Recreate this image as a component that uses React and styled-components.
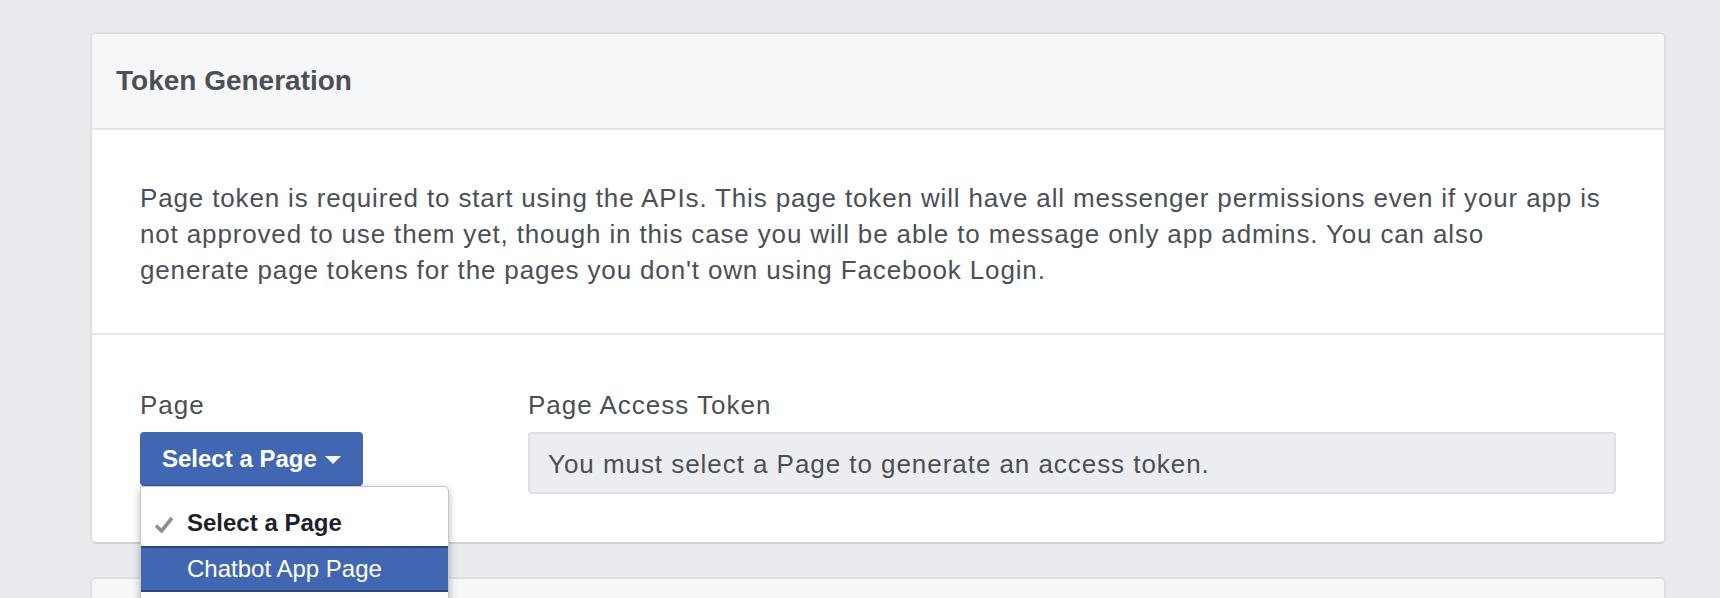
import React from 'react';
import styled, { createGlobalStyle } from 'styled-components';

const GlobalStyle = createGlobalStyle`
  html, body {
    margin: 0;
    padding: 0;
    background: #e9ebee;
    overflow: hidden;
    font-family: 'Liberation Sans', Helvetica, Arial, sans-serif;
    -webkit-font-smoothing: antialiased;
  }
`;

const Page = styled.div`
  padding: 32px 54px 0 90px;
`;

const Card = styled.section`
  background: #fff;
  border: 2px solid #dddfe2;
  border-bottom-color: #d0d1d5;
  border-radius: 6px;
  & + & {
    margin-top: 33px;
  }
`;

const CardHeader = styled.header`
  height: 94px;
  display: flex;
  align-items: center;
  padding: 0 24px;
  background: #f6f7f9;
  border-bottom: 2px solid #e5e5e5;
  border-radius: 4px 4px 0 0;
  color: #4b4f56;
  font-size: 28px;
  font-weight: bold;
`;

const Description = styled.p`
  margin: 0;
  padding: 50px 40px 45px 48px;
  border-bottom: 2px solid #e5e5e5;
  color: #4b4f56;
  font-size: 26px;
  line-height: 36px;
  letter-spacing: 0.85px;
  white-space: nowrap;
`;

const Form = styled.div`
  display: grid;
  grid-template-columns: 388px 1fr;
  padding: 55px 48px 48px;
`;

const Field = styled.div`
  display: flex;
  flex-direction: column;
  align-items: flex-start;
`;

const Label = styled.label`
  font-size: 26px;
  line-height: 30px;
  letter-spacing: 1px;
  margin-bottom: 12px;
  color: #4b4f56;
`;

const SelectWrap = styled.div`
  position: relative;
`;

const SelectButton = styled.button`
  height: 54px;
  display: inline-flex;
  align-items: center;
  gap: 8px;
  padding: 0 20px;
  background: #4267b2;
  border: 2px solid #4267b2;
  border-bottom-color: #3b5ea6;
  border-radius: 4px;
  color: #fff;
  font-family: inherit;
  font-size: 24px;
  font-weight: bold;
  cursor: pointer;
`;

const Caret = styled.span`
  width: 0;
  height: 0;
  border-left: 8px solid transparent;
  border-right: 8px solid transparent;
  border-top: 8px solid #fff;
  margin-top: 2px;
`;

const Menu = styled.ul`
  position: absolute;
  top: 100%;
  left: 0;
  z-index: 10;
  width: 309px;
  margin: 0;
  padding: 13px 0 14px;
  list-style: none;
  background: #fff;
  border: 1px solid #c4c7cc;
  border-radius: 0 5px 5px 5px;
  box-shadow: 0 3px 8px rgba(0, 0, 0, 0.28);
  box-sizing: border-box;
`;

const MenuItem = styled.li`
  position: relative;
  height: 46px;
  box-sizing: border-box;
  display: flex;
  align-items: center;
  padding-left: 46px;
  font-size: 24px;
  border-top: 2px solid ${(p) => (p.$active ? '#29487d' : 'transparent')};
  border-bottom: 2px solid ${(p) => (p.$active ? '#29487d' : 'transparent')};
  background: ${(p) => (p.$active ? '#4267b2' : 'transparent')};
  color: ${(p) => (p.$active ? '#fff' : '#1d2129')};
  font-weight: ${(p) => (p.$checked ? 'bold' : 'normal')};
`;

const Check = styled.svg`
  position: absolute;
  left: 13px;
  top: 14px;
`;

const TokenBox = styled.div`
  align-self: stretch;
  height: 62px;
  box-sizing: border-box;
  display: flex;
  align-items: center;
  padding: 2px 18px 0;
  background: #ebedf0;
  border: 2px solid #dddfe2;
  border-radius: 4px;
  color: #4b4f56;
  font-size: 26px;
  letter-spacing: 0.95px;
`;

const StubCard = styled(Card)`
  height: 100px;
  overflow: hidden;
`;

const StubHeader = styled.div`
  height: 100%;
  background: #f6f7f9;
`;

export default function App() {
  return (
    <>
      <GlobalStyle />
      <Page>
        <Card>
          <CardHeader>Token Generation</CardHeader>
          <Description>
            Page token is required to start using the APIs. This page token will have all messenger
            permissions even if your app is
            <br />
            not approved to use them yet, though in this case you will be able to message only app
            admins. You can also
            <br />
            generate page tokens for the pages you don't own using Facebook Login.
          </Description>
          <Form>
            <Field>
              <Label>Page</Label>
              <SelectWrap>
                <SelectButton>
                  Select a Page <Caret />
                </SelectButton>
                <Menu>
                  <MenuItem $checked>
                    <Check width="20" height="18" viewBox="0 0 20 18">
                      <polyline
                        points="2,9.5 7.5,15 18,2"
                        fill="none"
                        stroke="#8d9096"
                        strokeWidth="3.6"
                        strokeLinejoin="round"
                      />
                    </Check>
                    Select a Page
                  </MenuItem>
                  <MenuItem $active>Chatbot App Page</MenuItem>
                </Menu>
              </SelectWrap>
            </Field>
            <Field>
              <Label>Page Access Token</Label>
              <TokenBox>You must select a Page to generate an access token.</TokenBox>
            </Field>
          </Form>
        </Card>
        <StubCard>
          <StubHeader />
        </StubCard>
      </Page>
    </>
  );
}
